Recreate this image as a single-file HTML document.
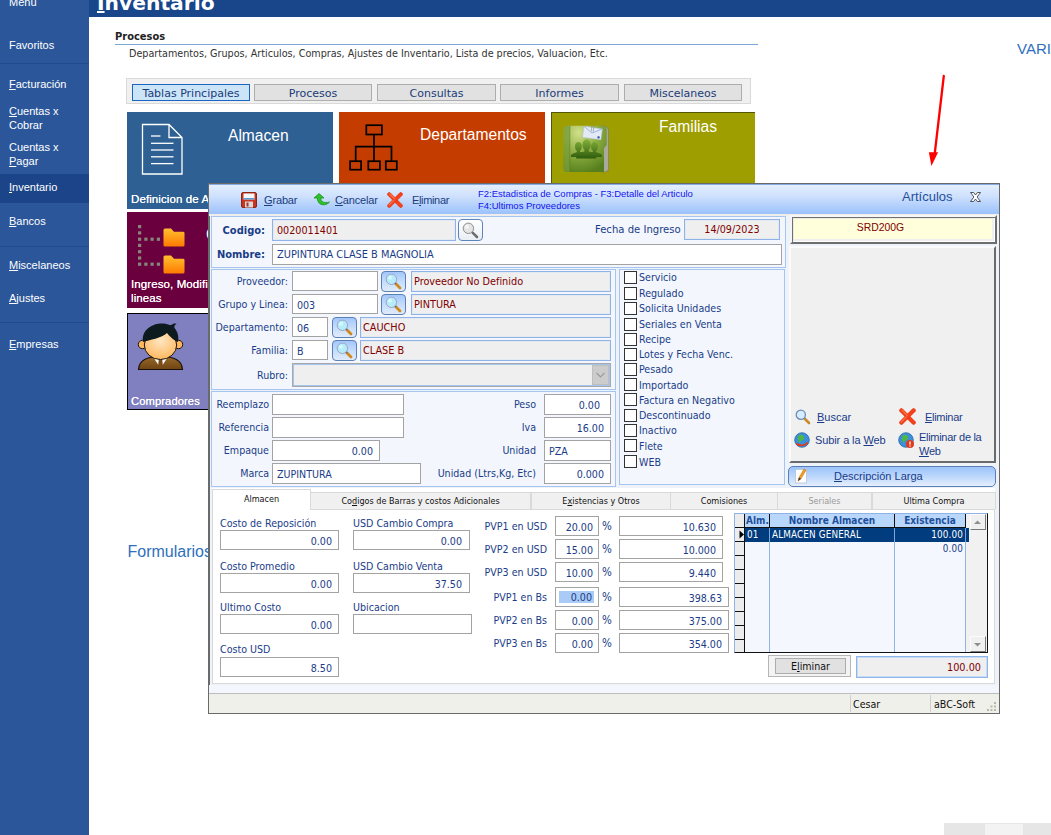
<!DOCTYPE html>
<html lang="es">
<head>
<meta charset="utf-8">
<title>Inventario - Artículos</title>
<style>
*{box-sizing:border-box;margin:0;padding:0}
html,body{width:1051px;height:835px;overflow:hidden;background:#fff}
body{position:relative;font-family:"Liberation Sans","DejaVu Sans",sans-serif;font-size:11px;color:#1a3c78}
.a{position:absolute;white-space:nowrap}
u{text-decoration:underline}
/* sidebar */
#side{left:0;top:0;width:89px;height:835px;background:#2b569a}
#side .it{position:absolute;left:9px;color:#fff;font-size:11px;line-height:14px;white-space:nowrap}
#side .sep{position:absolute;left:0;width:89px;height:1px;background:#214b8e}
#side .sel{position:absolute;left:0;top:174px;width:89px;height:29px;background:#1c4589}
/* header */
#hdr{left:89px;top:0;width:962px;height:17px;background:#19468a;overflow:hidden}
#hdr u{text-underline-offset:.5px;text-decoration-thickness:2px}
#hdr span{position:absolute;left:8px;top:-9px;color:#fff;font:bold 20.300px/24px "DejaVu Sans","Liberation Sans",sans-serif}
/* main */
.tile{position:absolute;color:#fff}
.tile .t{position:absolute;font-size:15.6px;color:#fff;white-space:nowrap}
.tile .d{position:absolute;left:4px;font-size:11.5px;letter-spacing:.1px;color:#fff;white-space:nowrap;text-shadow:0 0 .2px #fff}
.tabbtn{position:absolute;top:84px;height:17px;border:1px solid #adadad;background:#e1e1e1;color:#1a3c78;font:11px/18px "DejaVu Sans","Liberation Sans",sans-serif;text-align:center;overflow:hidden}
/* dialog */
#dlg{left:208px;top:183px;width:792px;height:531px;background:#eef3fa;border:1px solid #6a6a6a;border-left-width:2px}
#dw{left:0;top:0;width:0;height:0;font:10.6px/13px "DejaVu Sans Condensed","Liberation Sans",sans-serif;color:#1a3c88}
#dw div,#dw span{position:absolute;white-space:nowrap}
#tb{left:209px;top:184px;width:790px;height:30px;background:linear-gradient(#e6effe,#cfe1fd 40%,#9bc2fb)}
.tbt{font:11px/13px "Liberation Sans",sans-serif;color:#1b3d7d;top:194px;letter-spacing:-.15px}
.p{border:1px solid #a6c5ee;background:#f3f7fd}
.in{background:#fff;border:1px solid #a3a3a3;height:20px;line-height:20px;padding:0 4px;overflow:hidden}
.ro{background:#efefef;border:1px solid #8fb3e6;box-shadow:inset 0 0 0 1px #e3e9f1;height:21px;line-height:19px;padding:0 4px 0 2px;color:#800000;overflow:hidden;font-size:10.800px}
.r{text-align:right}
.lb{text-align:right;line-height:13px}
.sb{width:25px;height:21px;border:1px solid #5b80b2;border-radius:4px;background:linear-gradient(#a3c7fb,#c4dcfc 50%,#e0ebfb)}
.cb{left:624px;width:13px;height:13px;background:#fff;border:1px solid #333}
.cl{left:639px}
.tab{top:492px;height:17px;background:#f0f0f0;border:1px solid #d9d9d9;border-bottom:none;text-align:center;font-size:9px;line-height:16px;color:#111}
</style>
</head>
<body>
<!-- SIDEBAR -->
<div id="side" class="a">
  <div class="it" style="top:-5px">Menú</div>
  <div class="it" style="top:38px">Favoritos</div>
  <div class="sep" style="top:63px"></div>
  <div class="it" style="top:77px"><u>F</u>acturación</div>
  <div class="it" style="top:104px"><u>C</u>uentas x<br>Cobrar</div>
  <div class="it" style="top:140px">Cuentas x<br><u>P</u>agar</div>
  <div class="sel"></div>
  <div class="it" style="top:180px"><u>I</u>nventario</div>
  <div class="it" style="top:214px"><u>B</u>ancos</div>
  <div class="sep" style="top:246px"></div>
  <div class="it" style="top:258px"><u>M</u>iscelaneos</div>
  <div class="it" style="top:291px"><u>A</u>justes</div>
  <div class="sep" style="top:322px"></div>
  <div class="it" style="top:337px"><u>E</u>mpresas</div>
</div>
<!-- HEADER -->
<div id="hdr" class="a"><span><u>I</u>nventario</span></div>

<!-- MAIN -->
<div class="a" style="left:115px;top:30px;font:bold 11px/13px 'DejaVu Sans Condensed','DejaVu Sans','Liberation Sans',sans-serif;color:#222">Procesos</div>
<div class="a" style="left:115px;top:44px;width:643px;height:1px;background:#7aa7d9"></div>
<div class="a" style="left:129px;top:47px;font:10.700px/14px 'DejaVu Sans Condensed','Liberation Sans',sans-serif;color:#333">Departamentos, Grupos, Articulos, Compras, Ajustes de Inventario, Lista de precios, Valuacion, Etc.</div>
<div class="a" style="left:1017px;top:39px;font-size:15px;line-height:20px;color:#2f6fbd">VARIOS</div>

<div class="a" style="left:126px;top:78px;width:625px;height:26px;background:#f0f0f0;border:1px solid #d9d9d9"></div>
<div class="tabbtn" style="left:132px;width:118px;background:#cce4f7;border-color:#1a66c0">Tablas Principales</div>
<div class="tabbtn" style="left:254px;width:118px">Procesos</div>
<div class="tabbtn" style="left:377px;width:119px">Consultas</div>
<div class="tabbtn" style="left:500px;width:119px">Informes</div>
<div class="tabbtn" style="left:624px;width:118px">Miscelaneos</div>

<div class="tile" style="left:127px;top:112px;width:206px;height:97px;background:#2e6093"><svg style="position:absolute;left:14px;top:11px" width="43" height="53" viewBox="0 0 43 53"><path d="M1.500 1.500 H28 L41 14.500 V51 H1.500 Z M28 1.500 V14.500 H41" fill="none" stroke="#fff" stroke-width="1.300"/><g stroke="#fff" stroke-width="1.300"><line x1="10" y1="13" x2="19.500" y2="13"/><line x1="10" y1="20.300" x2="32.500" y2="20.300"/><line x1="10" y1="27" x2="32.500" y2="27"/><line x1="10" y1="33.800" x2="32.500" y2="33.800"/><line x1="10" y1="40.600" x2="32.500" y2="40.600"/></g></svg><div class="t" style="left:101px;top:15px">Almacen</div><div class="d" style="top:81px">Definicion de Almacenes</div></div>
<div class="tile" style="left:339px;top:112px;width:206px;height:97px;background:#c43c00"><svg style="position:absolute;left:8px;top:10px" width="54" height="51" viewBox="0 0 54 51"><g fill="none" stroke="#000" stroke-width="1.700"><rect x="19.300" y="3.200" width="15.600" height="9.300"/><rect x="3.100" y="39.200" width="11" height="8.500"/><rect x="21.300" y="39.200" width="11.600" height="8.500"/><rect x="38.800" y="39.200" width="11" height="8.500"/><path d="M27 12.500 V39.200 M8.700 39.200 V24.700 H44.500 V39.200"/></g></svg><div class="t" style="left:81px;top:13.5px">Departamentos</div></div>
<div class="tile" style="left:551px;top:112px;width:204px;height:97px;background:#9e9e00;border-top:1px solid #55550a;border-left:1px solid #55550a"><svg style="position:absolute;left:11px;top:12px" width="47" height="48" viewBox="0 0 47 48"><defs><radialGradient id="gf" cx=".35" cy=".15" r=".9"><stop offset="0" stop-color="#cfe08a"/><stop offset=".5" stop-color="#8eae42"/><stop offset="1" stop-color="#557f1c"/></radialGradient><linearGradient id="gp" gradientUnits="userSpaceOnUse" x1="0" y1="14" x2="0" y2="34"><stop offset="0" stop-color="#86b23a"/><stop offset="1" stop-color="#2c5a0c"/></linearGradient></defs><path d="M39.500 0.800 Q45.500 1.500 45.500 6 V43.500 Q45.500 46.900 41 46.900 H38 V0.800Z" fill="#a9a99c" stroke="#6e6e60" stroke-width="0.500"/><path d="M4.500 0.800 H39.500 Q43.500 1.500 43.700 5 V20 L41 23 V46.900 H4.500 Q0.500 46.900 0.500 43 V4.800 Q0.500 0.800 4.500 0.800Z" fill="url(#gf)"/><path d="M4.500 0.800 H6.600 V46.900 H4.500 Q0.500 46.900 0.500 43 V4.800 Q0.500 0.800 4.500 0.800Z" fill="#7a9c38" opacity=".75"/><rect x="6.500" y="0.800" width="0.700" height="46.100" fill="#5f8426"/><g fill="url(#gp)"><ellipse cx="15.400" cy="21.600" rx="3.400" ry="4.500"/><ellipse cx="31.500" cy="21.600" rx="3.400" ry="4.500"/><rect x="13.800" y="24" width="3.200" height="5"/><rect x="29.900" y="24" width="3.200" height="5"/><rect x="21.400" y="23" width="4.400" height="5"/><path d="M8 32 V30.500 Q8 28.800 11 28.200 L14 27 H33 L36 28.200 Q39 28.800 39 30.500 V32Z"/><ellipse cx="23.600" cy="20" rx="4.200" ry="5.700"/><path d="M13.200 33.600 V31 Q13.200 28.800 17 28 L21 26.500 H26.200 L30 28 Q33.300 28.800 33.300 31 V33.600Z"/></g><g transform="rotate(8 29 8)"><rect x="20.200" y="2.500" width="18.500" height="11" fill="#e3eaf5" stroke="#b4c2d8" stroke-width="0.500"/><path d="M20.200 2.500 L29 8 L38.700 2.500" fill="none" stroke="#7fa0dc" stroke-width="0.700"/><rect x="35" y="10.500" width="2.200" height="2" fill="#2a4ea8"/><path d="M28 0.500 V6.500 M30 0.500 V6.500" stroke="#8a8a8a" stroke-width="0.600" fill="none"/></g></svg><div class="t" style="left:107px;top:4.500px">Familias</div></div>
<div class="tile" style="left:127px;top:212px;width:206px;height:96px;background:#6b003e"><svg style="position:absolute;left:11px;top:13.200px" width="24" height="42" viewBox="0 0 24 42"><g fill="#86867a"><rect x="0" y="0" width="3.200" height="3.200"/><rect x="0" y="6.3" width="3.200" height="3.200"/><rect x="0" y="12.6" width="3.200" height="3.200"/><rect x="0" y="18.8" width="3.200" height="3.200"/><rect x="0" y="25.1" width="3.200" height="3.200"/><rect x="0" y="31.4" width="3.200" height="3.200"/><rect x="0" y="37.6" width="3.200" height="3.200"/><rect x="6.3" y="12.6" width="3.200" height="3.200"/><rect x="12.5" y="12.6" width="3.200" height="3.200"/><rect x="18.8" y="12.6" width="3.200" height="3.200"/><rect x="6.3" y="37.6" width="3.200" height="3.200"/><rect x="12.5" y="37.6" width="3.200" height="3.200"/><rect x="18.8" y="37.6" width="3.200" height="3.200"/></g></svg><svg style="position:absolute;left:36px;top:16.200px" width="22" height="19" viewBox="0 0 22 19"><defs><linearGradient id="go15" x1="0" y1="0" x2="0" y2="1"><stop offset="0" stop-color="#ffc030"/><stop offset="1" stop-color="#ff7a00"/></linearGradient></defs><path d="M0.500 2 Q0.500 0.500 2 0.500 H8 L11 3.700 H20 Q21.500 3.700 21.500 5 V17 Q21.500 18.500 20 18.500 H2 Q0.500 18.500 0.500 17Z" fill="url(#go15)"/></svg><svg style="position:absolute;left:36px;top:43.200px" width="22" height="19" viewBox="0 0 22 19"><defs><linearGradient id="go42" x1="0" y1="0" x2="0" y2="1"><stop offset="0" stop-color="#ffc030"/><stop offset="1" stop-color="#ff7a00"/></linearGradient></defs><path d="M0.500 2 Q0.500 0.500 2 0.500 H8 L11 3.700 H20 Q21.500 3.700 21.500 5 V17 Q21.500 18.500 20 18.500 H2 Q0.500 18.500 0.500 17Z" fill="url(#go42)"/></svg><div class="t" style="left:79px;top:13.500px">Grupos y Lineas</div><div class="d" style="top:65px;line-height:14px">Ingreso, Modificacion y consulta de<br>lineas</div></div>
<div class="tile" style="left:127px;top:313px;width:206px;height:97px;background:#8080c0;border:1px solid #000"><svg style="position:absolute;left:9px;top:8px" width="47" height="49" viewBox="0 0 47 49"><defs><radialGradient id="fc" cx=".5" cy=".35" r=".7"><stop offset="0" stop-color="#ffe7c0"/><stop offset="1" stop-color="#ffb45a"/></radialGradient><linearGradient id="su" x1="0" y1="0" x2="0" y2="1"><stop offset="0" stop-color="#9a6a2a"/><stop offset="1" stop-color="#6e4412"/></linearGradient></defs><path d="M1.500 47.500 C2 38 10 35 23.500 34 C37 35 45 38 45.500 47.500Z" fill="url(#su)" stroke="#1a1208" stroke-width="1.200"/><path d="M16 35 L23.500 46 L31 35 L23.500 33Z" fill="#fff"/><path d="M21.800 37 H25.200 L26 45 L23.500 47 L21 45Z" fill="#7a4a18"/><circle cx="5.500" cy="22.500" r="4.200" fill="#ffb860" stroke="#1a1208" stroke-width="1"/><circle cx="41.500" cy="22.500" r="4.200" fill="#ffb860" stroke="#1a1208" stroke-width="1"/><ellipse cx="23.500" cy="23" rx="16.200" ry="14.500" fill="url(#fc)" stroke="#1a1208" stroke-width="1"/><path d="M6 20 C4 6 18 0.500 27 1.500 C31 2 33 3.500 34 3 C36 1.500 38 1 39.500 1.800 C37.500 3 37 4.500 37.500 6 C41 10 42 15 41 20 C38 19 33 15 30 11 C25 16 12 18 6 20Z" fill="#0d1a1e"/></svg><div class="d" style="top:81px;left:3px;font-size:11.200px">Compradores</div></div>

<div class="a" style="left:127.500px;top:542px;font-size:16px;line-height:20px;color:#2f6fbd">Formularios</div>

<!-- red arrow -->
<svg class="a" style="left:920px;top:70px" width="40" height="100" viewBox="0 0 40 100"><line x1="23.800" y1="6" x2="14.800" y2="83" stroke="#ff0000" stroke-width="2.300" stroke-linecap="round"/><polygon points="8.900,82.300 18.100,82.300 11.400,96.100" fill="#ff0000"/></svg>

<!-- bottom-right -->
<div class="a" style="left:944px;top:823px;width:107px;height:12px;background:#e6e6e6"></div><div class="a" style="left:985px;top:824px;width:38px;height:11px;background:#f3f3f3"></div>

<!-- DIALOG -->
<div id="dlg" class="a"></div>
<div id="dw" class="a">
<!--D1-->
<div id="tb"></div><div style="left:209px;top:184px;width:790px;height:1px;background:#86abe0"></div><div style="left:209px;top:214px;width:790px;height:2px;background:#efeeec"></div>
<svg style="position:absolute;left:241px;top:192px" width="16" height="16" viewBox="0 0 16 16"><rect x="0.500" y="0.500" width="15" height="15" rx="1.500" fill="#c8341f" stroke="#8e2416"/><rect x="2.500" y="1.500" width="11" height="6" fill="#f4f8fc"/><rect x="2.500" y="6" width="11" height="1.500" fill="#5b9bd5"/><rect x="4" y="9.500" width="8" height="6" fill="#d9d9d9"/><rect x="5.500" y="10.500" width="2" height="4" fill="#a33"/></svg>
<span class="tbt" style="left:264px"><u>G</u>rabar</span>
<svg style="position:absolute;left:313px;top:193px" width="18" height="14" viewBox="0 0 18 14"><path d="M1 5 L6 0.500 L11 5 L7.800 5 C8 9 11 10.500 16.500 9 C13 13.500 4.500 13 4.200 5 Z" fill="#2cc22c" stroke="#178a17" stroke-width="0.700"/></svg>
<span class="tbt" style="left:335px"><u>C</u>ancelar</span>
<svg style="position:absolute;left:387px;top:192px" width="16" height="16" viewBox="0 0 16 16"><g fill="#f5401a" stroke="#e02a0c" stroke-width="0.500"><rect x="-1.800" y="6.300" width="19.600" height="3.400" rx="1.300" transform="rotate(45 8 8)"/><rect x="-1.800" y="6.300" width="19.600" height="3.400" rx="1.300" transform="rotate(-45 8 8)"/></g><g fill="#ff8a5a" opacity=".7"><rect x="-0.500" y="6.800" width="8" height="1.200" rx="0.600" transform="rotate(45 8 8)"/><rect x="-0.500" y="6.800" width="8" height="1.200" rx="0.600" transform="rotate(-45 8 8)"/></g></svg>
<span class="tbt" style="left:412px;letter-spacing:-.35px">E<u>l</u>iminar</span>
<span style="left:478px;top:188px;font:9.5px/11px 'Liberation Sans',sans-serif;color:#1414f0">F2:Estadistica de Compras - F3:Detalle del Articulo</span>
<span style="left:478px;top:200px;font:9.5px/11px 'Liberation Sans',sans-serif;color:#1414f0">F4:Ultimos Proveedores</span>
<span style="left:902px;top:188px;font:13px/18px 'Liberation Sans',sans-serif;color:#1f4f9c">Artículos</span>
<svg style="position:absolute;left:969px;top:191px" width="13" height="12" viewBox="0 0 13 12"><path d="M1.500 1.500 H4.600 L6.500 4 L8.400 1.500 H11.500 L8.100 6 L11.500 10.500 H8.400 L6.500 8 L4.600 10.500 H1.500 L4.900 6 Z" fill="#fff" stroke="#3a3a3a" stroke-width="0.850" stroke-linejoin="round"/></svg>
<div class="p" style="left:211px;top:216px;width:575px;height:52px"></div>
<span class="lb" style="left:214px;width:51px;top:224px;font-weight:bold;font-size:11px">Codigo:</span>
<span class="lb" style="left:214px;width:51px;top:248px;font-weight:bold;font-size:11px">Nombre:</span>
<div class="ro" style="left:272px;top:219px;width:184px;height:22px;line-height:21px;font-size:10.700px;padding-left:4px">0020011401</div>
<div style="left:458px;top:219px;width:25px;height:22px;border:1px solid #5d86b8;border-radius:4px;background:linear-gradient(#fff,#e9eef4)"></div><svg style="position:absolute;left:462px;top:222px" width="17" height="17" viewBox="0 0 17 17"><line x1="10.800" y1="10.800" x2="15" y2="15" stroke="#6e6e6e" stroke-width="2.600" stroke-linecap="round"/><circle cx="6.400" cy="6.300" r="5.200" fill="#e4e4e4" stroke="#8c8c8c" stroke-width="1"/><circle cx="5" cy="4.800" r="2" fill="#fafafa" opacity=".8"/></svg>
<span style="left:595px;top:223px;font-size:11.200px">Fecha de Ingreso</span>
<div class="ro" style="left:684px;top:219px;width:96px;height:21px;line-height:20px;text-align:center;font-size:10.700px;padding:0">14/09/2023</div>
<div class="in" style="left:272px;top:244px;width:510px;height:21px;line-height:20px;font-size:10.900px">ZUPINTURA CLASE B MAGNOLIA</div>
<div class="p" style="left:211px;top:269px;width:405px;height:121px"></div>
<span class="lb" style="left:212px;width:76px;top:275px">Proveedor:</span>
<div class="in" style="left:292px;top:271px;width:86px"></div>
<div class="sb" style="left:381px;top:271px"></div><svg style="position:absolute;left:385px;top:273px" width="17" height="17" viewBox="0 0 17 17"><line x1="10.800" y1="10.800" x2="15" y2="15" stroke="#d08a1c" stroke-width="2.800" stroke-linecap="round"/><line x1="9.500" y1="9.500" x2="11" y2="11" stroke="#6b6b88" stroke-width="2"/><circle cx="6.400" cy="6.300" r="5.200" fill="#b4ecfa" stroke="#9a9cba" stroke-width="0.900"/><circle cx="5" cy="4.800" r="2" fill="#dffaff" opacity=".8"/></svg>
<div class="ro" style="left:411px;top:271px;width:200px">Proveedor No Definido</div>
<span class="lb" style="left:212px;width:76px;top:298px">Grupo y Linea:</span>
<div class="in" style="left:292px;top:294px;width:86px">003</div>
<div class="sb" style="left:381px;top:294px"></div><svg style="position:absolute;left:385px;top:296px" width="17" height="17" viewBox="0 0 17 17"><line x1="10.800" y1="10.800" x2="15" y2="15" stroke="#d08a1c" stroke-width="2.800" stroke-linecap="round"/><line x1="9.500" y1="9.500" x2="11" y2="11" stroke="#6b6b88" stroke-width="2"/><circle cx="6.400" cy="6.300" r="5.200" fill="#b4ecfa" stroke="#9a9cba" stroke-width="0.900"/><circle cx="5" cy="4.800" r="2" fill="#dffaff" opacity=".8"/></svg>
<div class="ro" style="left:411px;top:294px;width:200px">PINTURA</div>
<span class="lb" style="left:212px;width:76px;top:321px">Departamento:</span>
<div class="in" style="left:292px;top:317px;width:36px">06</div>
<div class="sb" style="left:332px;top:317px"></div><svg style="position:absolute;left:336px;top:319px" width="17" height="17" viewBox="0 0 17 17"><line x1="10.800" y1="10.800" x2="15" y2="15" stroke="#d08a1c" stroke-width="2.800" stroke-linecap="round"/><line x1="9.500" y1="9.500" x2="11" y2="11" stroke="#6b6b88" stroke-width="2"/><circle cx="6.400" cy="6.300" r="5.200" fill="#b4ecfa" stroke="#9a9cba" stroke-width="0.900"/><circle cx="5" cy="4.800" r="2" fill="#dffaff" opacity=".8"/></svg>
<div class="ro" style="left:360px;top:317px;width:251px">CAUCHO</div>
<span class="lb" style="left:212px;width:76px;top:344px">Familia:</span>
<div class="in" style="left:292px;top:340px;width:36px">B</div>
<div class="sb" style="left:332px;top:340px"></div><svg style="position:absolute;left:336px;top:342px" width="17" height="17" viewBox="0 0 17 17"><line x1="10.800" y1="10.800" x2="15" y2="15" stroke="#d08a1c" stroke-width="2.800" stroke-linecap="round"/><line x1="9.500" y1="9.500" x2="11" y2="11" stroke="#6b6b88" stroke-width="2"/><circle cx="6.400" cy="6.300" r="5.200" fill="#b4ecfa" stroke="#9a9cba" stroke-width="0.900"/><circle cx="5" cy="4.800" r="2" fill="#dffaff" opacity=".8"/></svg>
<div class="ro" style="left:360px;top:340px;width:251px">CLASE B</div>
<span class="lb" style="left:212px;width:76px;top:369px">Rubro:</span>
<div style="left:292px;top:363px;width:319px;height:24px;background:#efefef;border:1px solid #a8a8a8;box-shadow:inset 0 0 0 1px #a6c5ee"></div>
<div style="left:592px;top:365px;width:17px;height:20px;background:#cccccc;border:1px solid #bfbfbf"></div>
<svg style="position:absolute;left:595px;top:371px" width="11" height="8" viewBox="0 0 11 8"><path d="M1.500 2 L5.500 6 L9.500 2" fill="none" stroke="#9a9a9a" stroke-width="1.100"/></svg>
<div class="p" style="left:619px;top:269px;width:166px;height:216px"></div>
<div class="cb" style="top:271px"></div><span class="cl" style="top:271px">Servicio</span>
<div class="cb" style="top:287px"></div><span class="cl" style="top:287px">Regulado</span>
<div class="cb" style="top:302px"></div><span class="cl" style="top:302px">Solicita Unidades</span>
<div class="cb" style="top:318px"></div><span class="cl" style="top:318px">Seriales en Venta</span>
<div class="cb" style="top:333px"></div><span class="cl" style="top:333px">Recipe</span>
<div class="cb" style="top:348px"></div><span class="cl" style="top:348px">Lotes y Fecha Venc.</span>
<div class="cb" style="top:363px"></div><span class="cl" style="top:363px">Pesado</span>
<div class="cb" style="top:378px"></div><span class="cl" style="top:379px">Importado</span>
<div class="cb" style="top:393px"></div><span class="cl" style="top:394px">Factura en Negativo</span>
<div class="cb" style="top:409px"></div><span class="cl" style="top:409px">Descontinuado</span>
<div class="cb" style="top:424px"></div><span class="cl" style="top:424px">Inactivo</span>
<div class="cb" style="top:439px"></div><span class="cl" style="top:440px">Flete</span>
<div class="cb" style="top:455px"></div><span class="cl" style="top:456px">WEB</span>
<div class="p" style="left:211px;top:391px;width:405px;height:96px"></div>
<span class="lb" style="left:212px;width:57px;top:398px">Reemplazo</span>
<div class="in" style="left:272px;top:394px;width:132px;height:21px;"></div>
<span class="lb" style="left:212px;width:57px;top:421px">Referencia</span>
<div class="in" style="left:272px;top:417px;width:132px;height:21px;"></div>
<span class="lb" style="left:212px;width:57px;top:444px">Empaque</span>
<div class="in r" style="left:272px;top:440px;width:108px;height:21px;padding-right:6px">0.00</div>
<span class="lb" style="left:212px;width:57px;top:467px">Marca</span>
<div class="in" style="left:272px;top:463px;width:149px;height:21px;">ZUPINTURA</div>
<span class="lb" style="left:416px;width:120px;top:398px">Peso</span>
<div class="in r" style="left:544px;top:394px;width:67px;height:21px;padding-right:10px">0.00</div>
<span class="lb" style="left:416px;width:120px;top:421px">Iva</span>
<div class="in r" style="left:544px;top:417px;width:67px;height:21px;padding-right:6px">16.00</div>
<span class="lb" style="left:416px;width:120px;top:444px">Unidad</span>
<div class="in" style="left:544px;top:440px;width:67px;height:21px;">PZA</div>
<span class="lb" style="left:416px;width:120px;top:467px">Unidad (Ltrs,Kg, Etc)</span>
<div class="in r" style="left:544px;top:463px;width:67px;height:21px;padding-right:6px">0.000</div>
<!--/D1-->
<!--D2-->
<div style="left:790px;top:215px;width:207px;height:29px;background:#ffffdc;border:2px solid;border-color:#f6f6f6 #6e6e6e #6e6e6e #f6f6f6;box-shadow:inset 1px 1px 0 #707070,inset -1px -1px 0 #fff,inset 2px 2px 0 #ecece4,inset -3px -3px 0 #efefef"></div>
<span style="left:790px;width:181px;top:221px;text-align:center;font:10.4px/13px 'Liberation Sans',sans-serif;color:#800000">SRD200G</span>
<div style="left:789px;top:246px;width:207px;height:217px;background:#f0f0f0;border:2px solid;border-color:#fbfbfb #6b6b6b #6b6b6b #fbfbfb"></div>
<svg style="position:absolute;left:795px;top:409px" width="16" height="16" viewBox="0 0 16 16"><line x1="9" y1="9" x2="14" y2="14" stroke="#c98a2b" stroke-width="2.600" stroke-linecap="round"/><circle cx="5.800" cy="5.800" r="4.600" fill="#d6ecff" stroke="#6a8db5" stroke-width="1.300"/></svg>
<span style="left:817px;top:411px;font:11px/13px 'Liberation Sans',sans-serif"><u>B</u>uscar</span>
<svg style="position:absolute;left:899px;top:408px" width="17" height="17" viewBox="0 0 16 16"><g fill="#f5401a" stroke="#e02a0c" stroke-width="0.500"><rect x="-1.800" y="6.300" width="19.600" height="3.400" rx="1.300" transform="rotate(45 8 8)"/><rect x="-1.800" y="6.300" width="19.600" height="3.400" rx="1.300" transform="rotate(-45 8 8)"/></g><g fill="#ff8a5a" opacity=".7"><rect x="-0.500" y="6.800" width="8" height="1.200" rx="0.600" transform="rotate(45 8 8)"/><rect x="-0.500" y="6.800" width="8" height="1.200" rx="0.600" transform="rotate(-45 8 8)"/></g></svg>
<span style="left:925px;top:411px;font:11px/13px 'Liberation Sans',sans-serif;letter-spacing:-.3px"><u>E</u>liminar</span>
<svg style="position:absolute;left:794px;top:432px" width="16" height="16" viewBox="0 0 16 16"><circle cx="8" cy="8" r="7.300" fill="#3d8fd8" stroke="#2a6aa8" stroke-width="0.800"/><path d="M5 3 C8 2 11 4 10 7 C9 9 6 8 6 11 C4 10 3 6 5 3Z" fill="#4cb648"/><path d="M2.500 11.500 C6 14.500 11 14 13.500 10.500" fill="none" stroke="#e03a1e" stroke-width="1.800"/></svg>
<span style="left:815px;top:434px;font:11px/13px 'Liberation Sans',sans-serif;letter-spacing:-.1px">Subir a la <u>W</u>eb</span>
<svg style="position:absolute;left:898px;top:432px" width="17" height="17" viewBox="0 0 17 17"><circle cx="8" cy="8" r="7.300" fill="#3d8fd8" stroke="#2a6aa8" stroke-width="0.800"/><path d="M5 3 C8 2 11 4 10 7 C9 9 6 8 6 11 C4 10 3 6 5 3Z" fill="#4cb648"/><circle cx="12" cy="12" r="4" fill="#e03a1e"/><rect x="11.400" y="9.500" width="1.200" height="3.200" fill="#fff"/><rect x="11.400" y="13.500" width="1.200" height="1.200" fill="#fff"/></svg>
<span style="left:919px;top:430px;font:11px/14px 'Liberation Sans',sans-serif;letter-spacing:-.3px">Eliminar de la<br><u>W</u>eb</span>
<div style="left:788px;top:466px;width:208px;height:21px;border:1px solid #5b7fb4;border-radius:5px;background:linear-gradient(#9cc3fb,#bcd7fc 50%,#e6effd)"></div>
<svg style="position:absolute;left:795px;top:468px" width="14" height="16" viewBox="0 0 14 16"><rect x="0.500" y="1.500" width="11" height="13.500" fill="#fdfdfd" stroke="#b7c3d3" stroke-width="0.800"/><path d="M3 13 L4 9.500 L9 1 L11 2.200 L6 10.800 Z" fill="#f0a020" stroke="#b86a10" stroke-width="0.500"/><path d="M3 13 L4 9.500 L6 10.800 Z" fill="#333"/></svg>
<span style="left:834px;top:470px;font:11px/13px 'Liberation Sans',sans-serif"><u>D</u>escripción Larga</span>
<div style="left:212px;top:488px;width:783px;height:22px;background:#fff"></div><div style="left:212px;top:509px;width:783px;height:175px;background:#fff;border:1px solid #d9d9d9"></div>
<div class="tab" style="left:310px;width:221px;color:#111">Co<u>d</u>igos de Barras y costos Adicionales</div>
<div class="tab" style="left:531px;width:140px;color:#111">E<u>x</u>istencias y Otros</div>
<div class="tab" style="left:670px;width:108px;color:#111">Comisiones</div>
<div class="tab" style="left:777px;width:95px;color:#9a9a9a">Seriales</div>
<div class="tab" style="left:872px;width:124px;color:#111">Ultima Compra</div>
<div class="tab" style="left:212px;top:489px;width:99px;height:21px;background:#fff;line-height:19px">Almacen</div>
<span style="left:220px;top:517px">Costo de Reposición</span>
<div class="in r" style="left:220px;top:530px;width:119px;padding-right:6px">0.00</div>
<span style="left:220px;top:560px">Costo Promedio</span>
<div class="in r" style="left:220px;top:573px;width:119px;padding-right:6px">0.00</div>
<span style="left:220px;top:601px">Ultimo Costo</span>
<div class="in r" style="left:220px;top:614px;width:119px;padding-right:6px">0.00</div>
<span style="left:220px;top:643px">Costo USD</span>
<div class="in r" style="left:220px;top:657px;width:119px;padding-right:6px">8.50</div>
<span style="left:353px;top:517px">USD Cambio Compra</span>
<div class="in r" style="left:353px;top:530px;width:117px;padding-right:7px">0.00</div>
<span style="left:353px;top:560px">USD Cambio Venta</span>
<div class="in r" style="left:353px;top:573px;width:117px;padding-right:7px">37.50</div>
<span style="left:353px;top:601px">Ubicacion</span>
<div class="in r" style="left:353px;top:614px;width:119px;padding-right:7px"></div>
<span class="lb" style="left:467px;width:80px;top:520px">PVP1 en USD</span>
<div class="in r" style="left:555px;top:516px;width:44px;padding-right:5px">20.00</div>
<span style="left:602px;top:520px;font-size:11.500px">%</span>
<div class="in r" style="left:619px;top:516px;width:104px;padding-right:6px">10.630</div>
<span class="lb" style="left:467px;width:80px;top:543px">PVP2 en USD</span>
<div class="in r" style="left:555px;top:539px;width:44px;padding-right:5px">15.00</div>
<span style="left:602px;top:543px;font-size:11.500px">%</span>
<div class="in r" style="left:619px;top:539px;width:104px;padding-right:6px">10.000</div>
<span class="lb" style="left:467px;width:80px;top:566px">PVP3 en USD</span>
<div class="in r" style="left:555px;top:562px;width:44px;padding-right:5px">10.00</div>
<span style="left:602px;top:566px;font-size:11.500px">%</span>
<div class="in r" style="left:619px;top:562px;width:104px;padding-right:6px">9.440</div>
<span class="lb" style="left:467px;width:80px;top:591px">PVP1 en Bs</span>
<div class="in" style="left:555px;top:587px;width:44px"></div><span style="left:559px;top:591px;width:35px;height:12px;line-height:12px;background:#a9cbf5;text-align:right;padding-right:2px">0.00</span>
<span style="left:602px;top:591px;font-size:11.500px">%</span>
<div class="in r" style="left:619px;top:587px;width:110px;padding-right:6px">398.63</div>
<span class="lb" style="left:467px;width:80px;top:614px">PVP2 en Bs</span>
<div class="in r" style="left:555px;top:610px;width:44px;padding-right:5px">0.00</div>
<span style="left:602px;top:614px;font-size:11.500px">%</span>
<div class="in r" style="left:619px;top:610px;width:110px;padding-right:6px">375.00</div>
<span class="lb" style="left:467px;width:80px;top:637px">PVP3 en Bs</span>
<div class="in r" style="left:555px;top:633px;width:44px;padding-right:5px">0.00</div>
<span style="left:602px;top:637px;font-size:11.500px">%</span>
<div class="in r" style="left:619px;top:633px;width:110px;padding-right:6px">354.00</div>
<div style="left:734px;top:513px;width:254px;height:140px;background:#f4f7fd;border:1px solid;border-color:#8fb3e4 #111 #111 #8fb3e4"></div>
<div style="left:735px;top:514px;width:10px;height:138px;background:#ececec;border-right:1px solid #111"></div>
<div style="left:735px;top:527px;width:10px;height:1px;background:#111"></div>
<div style="left:735px;top:541px;width:10px;height:1px;background:#111"></div>
<div style="left:735px;top:555px;width:10px;height:1px;background:#111"></div>
<div style="left:735px;top:569px;width:10px;height:1px;background:#111"></div>
<div style="left:735px;top:583px;width:10px;height:1px;background:#111"></div>
<div style="left:735px;top:597px;width:10px;height:1px;background:#111"></div>
<div style="left:735px;top:611px;width:10px;height:1px;background:#111"></div>
<div style="left:735px;top:625px;width:10px;height:1px;background:#111"></div>
<div style="left:735px;top:639px;width:10px;height:1px;background:#111"></div>
<div style="left:745px;top:514px;width:221px;height:14px;background:#b9d7fb;border-bottom:1px solid #111"></div>
<div style="left:769px;top:514px;width:1px;height:13px;background:#111"></div>
<div style="left:769px;top:528px;width:1px;height:124px;background:#8fb3e4"></div>
<div style="left:894px;top:514px;width:1px;height:13px;background:#111"></div>
<div style="left:894px;top:528px;width:1px;height:124px;background:#8fb3e4"></div>
<div style="left:965px;top:514px;width:1px;height:13px;background:#111"></div>
<div style="left:965px;top:528px;width:1px;height:124px;background:#8fb3e4"></div>
<div style="left:966px;top:514px;width:21px;height:138px;background:#f1f1f1"></div>
<div style="left:745px;top:528px;width:224px;height:14px;background:#003c7e"></div>
<div style="left:769px;top:528px;width:1px;height:14px;background:#7fa6dc"></div>
<div style="left:894px;top:528px;width:1px;height:14px;background:#7fa6dc"></div>
<div style="left:965px;top:528px;width:1px;height:14px;background:#7fa6dc"></div>
<span style="left:745px;width:25px;top:514px;font-weight:bold;font-size:10px;line-height:13px;color:#1f4f9c;text-align:center">Alm.</span>
<span style="left:770px;width:124px;top:514px;font-weight:bold;font-size:10px;line-height:13px;color:#1f4f9c;text-align:center">Nombre Almacen</span>
<span style="left:895px;width:70px;top:514px;font-weight:bold;font-size:10px;line-height:13px;color:#1f4f9c;text-align:center">Existencia</span>
<span style="left:747px;top:528px;color:#fff;font-size:9.800px;line-height:13px;letter-spacing:.15px">01</span>
<span style="left:772px;top:528px;color:#fff;font-size:9.800px;line-height:13px;letter-spacing:.15px">ALMACEN GENERAL</span>
<span style="left:895px;width:68px;text-align:right;top:528px;color:#fff;font-size:9.800px;line-height:13px;letter-spacing:.15px">100.00</span>
<span style="left:895px;width:68px;text-align:right;top:542px;font-size:9.800px;line-height:13px;letter-spacing:.15px">0.00</span>
<svg style="position:absolute;left:739px;top:530px" width="6" height="9" viewBox="0 0 6 9"><path d="M0.500 0.500 L5 4.500 L0.500 8.500Z" fill="#000"/></svg>
<div style="left:970px;top:514px;width:16px;height:16px;background:#f0f0f0;border:1px solid;border-color:#fcfcfc #7a7a7a #7a7a7a #fcfcfc"></div><svg style="position:absolute;left:971px;top:517px" width="13" height="10" viewBox="0 0 13 10"><path d="M3 7 L6.500 3.500 L10 7Z" fill="#8f8f8f"/></svg>
<div style="left:970px;top:636px;width:16px;height:16px;background:#f0f0f0;border:1px solid;border-color:#fcfcfc #7a7a7a #7a7a7a #fcfcfc"></div><svg style="position:absolute;left:971px;top:639px" width="13" height="10" viewBox="0 0 13 10"><path d="M3 4 L6.500 7.500 L10 4Z" fill="#8f8f8f"/></svg>
<div style="left:768px;top:655px;width:83px;height:22px;border:1px solid #b5b5b5;background:#f3f3f3"></div>
<div style="left:775px;top:658px;width:71px;height:16px;border:1px solid #adadad;background:#e1e1e1;text-align:center;line-height:14px;color:#111">E<u>l</u>iminar</div>
<div class="ro r" style="left:856px;top:656px;width:132px;height:22px;line-height:21px;padding-right:6px;border-color:#8fb5e8;box-shadow:inset 0 0 0 1px #c9dcf5">100.00</div>
<div style="left:209px;top:685px;width:790px;height:8px;background:#f3f7fd"></div>
<div style="left:209px;top:693px;width:790px;height:1px;background:#bdbdbd"></div>
<div style="left:209px;top:694px;width:790px;height:19px;background:#f0f0ea"></div>
<div style="left:850px;top:695px;width:1px;height:17px;background:#cfcfcf"></div>
<div style="left:930px;top:695px;width:1px;height:17px;background:#cfcfcf"></div>
<span style="left:853px;top:698px;color:#111">Cesar</span>
<span style="left:934px;top:698px;color:#111">aBC-Soft</span>
<svg style="position:absolute;left:986px;top:701px" width="12" height="11" viewBox="0 0 12 11"><g fill="#b8b8a8"><rect x="8" y="1" width="2" height="2"/><rect x="8" y="4.500" width="2" height="2"/><rect x="8" y="8" width="2" height="2"/><rect x="4.500" y="4.500" width="2" height="2"/><rect x="4.500" y="8" width="2" height="2"/><rect x="1" y="8" width="2" height="2"/></g></svg>
<!--/D2-->
</div>
</body>
</html>
